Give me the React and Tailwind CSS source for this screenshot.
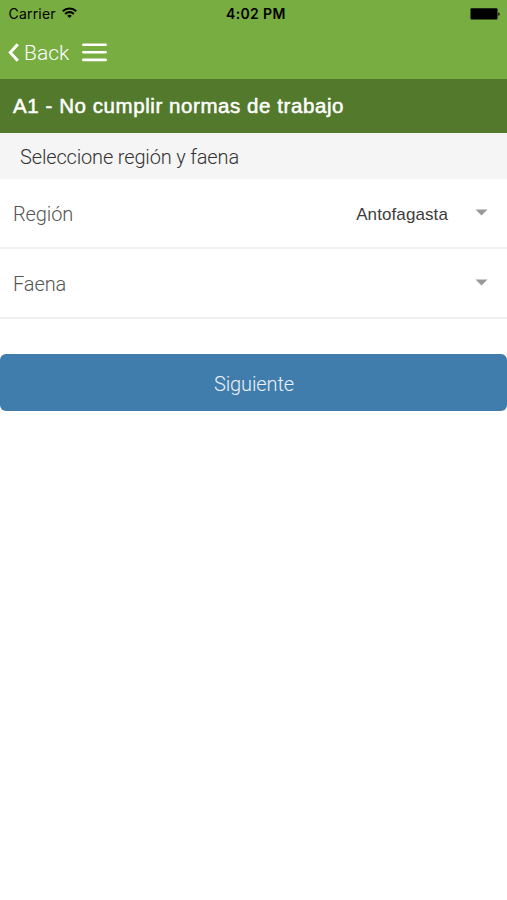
const StatusBar = () => (
  <div className="relative flex h-[27px] items-center justify-between pl-[8.5px] pr-[7px] text-black font-['Inter',sans-serif]">
    <div className="flex items-center gap-[6.5px]">
      <span className="text-[14px] leading-[27px] tracking-[0.2px]">Carrier</span>
      <svg className="mb-[2px] h-[11px] w-[15px]" viewBox="0 0 15 11" fill="none" stroke="currentColor" strokeWidth="2.1">
        <path d="M0.8 4.2a9.6 9.6 0 0 1 13.4 0" />
        <path d="M3.2 6.9a6.2 6.2 0 0 1 8.6 0" />
        <path d="M7.5 11L5.2 8.8a3.3 3.3 0 0 1 4.6 0z" fill="currentColor" stroke="none" />
      </svg>
    </div>
    <span className="absolute left-[226px] text-[14px] font-semibold leading-[27px] tracking-[0.35px] whitespace-nowrap">4:02 PM</span>
    <svg className="h-[12px] w-[30px]" viewBox="0 0 30 12" fill="currentColor">
      <rect x="0.5" y="0.3" width="27" height="11.2" rx="1" />
      <path d="M28.3 4.2a2 2 0 0 1 0 3.8z" />
    </svg>
  </div>
);

const NavBar = () => (
  <nav className="flex h-[52px] items-center pl-2 text-white">
    <button className="flex items-center gap-[5px]">
      <svg className="mb-[2px] h-[19px] w-[11px]" viewBox="0 0 11 19" fill="none" stroke="currentColor" strokeWidth="3">
        <path d="M9.8 1.2L2.3 9.5l7.5 8.3" />
      </svg>
      <span className="text-[21px] font-light leading-[51px]">Back</span>
    </button>
    <button className="ml-[13px]" aria-label="Menu">
      <svg className="mb-[2px] block h-[20px] w-[25px]" viewBox="0 0 25 20" stroke="currentColor" strokeWidth="2.6" strokeLinecap="round">
        <path d="M1.3 2.8h22.4M1.3 10.3h22.4M1.3 17.9h22.4" />
      </svg>
    </button>
  </nav>
);

const SelectRow = ({ label, value }) => (
  <div className="flex h-[70px] items-center border-b-2 border-[#f0f0f0] pl-[13px] pr-[19px] pt-[2px]">
    <span className="flex-1 text-[20px] font-light tracking-[-0.1px] text-[#555]">{label}</span>
    <span className="mr-[27px] pt-[2px] text-[17px] tracking-[0.1px] text-[#3c3c3c] font-['Liberation_Sans',Arial,sans-serif]">{value}</span>
    <svg className="mb-[3px] h-[7px] w-[13px]" viewBox="0 0 13 7" fill="#999">
      <path d="M0.5 0.5h12l-6 6z" />
    </svg>
  </div>
);

const App = () => {
  return (
    <div className="min-h-screen bg-white font-['Roboto',sans-serif]">
      <header className="bg-[#77ad41]">
        <StatusBar />
        <NavBar />
      </header>

      <h1 className="h-[54px] bg-[#53792d] pl-[13px] text-[20.5px] leading-[54px] tracking-[0.57px] text-white whitespace-nowrap [-webkit-text-stroke:0.5px_white] font-['Liberation_Sans',Arial,sans-serif]">
        A1 - No cumplir normas de trabajo
      </h1>
      <h2 className="h-[46px] bg-[#f5f5f5] pl-5 text-[20px] font-light leading-[48px] tracking-[-0.16px] text-[#333]">
        Seleccione región y faena
      </h2>

      <SelectRow label="Región" value="Antofagasta" />
      <SelectRow label="Faena" value="" />

      <button className="mt-[35px] block h-[57px] w-full rounded-[6px] bg-[#407cac] pt-[2px] pl-px text-[20px] font-light tracking-[-0.1px] text-white/90">
        Siguiente
      </button>
    </div>
  );
};

export default App;
